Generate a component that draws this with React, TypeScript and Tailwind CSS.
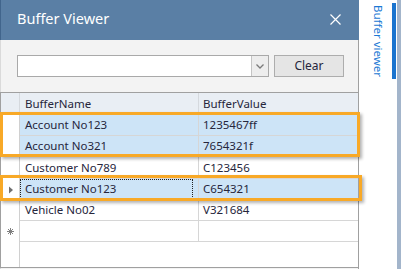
type Row = {
  name: string;
  value: string;
  selected?: boolean;
  current?: boolean;
  h: string;
};

const rows: Row[] = [
  { name: "Account No123", value: "1235467ff", selected: true, h: "h-[22px]" },
  { name: "Account No321", value: "7654321f", selected: true, h: "h-[21px]" },
  { name: "Customer No789", value: "C123456", h: "h-[22px]" },
  { name: "Customer No123", value: "C654321", selected: true, current: true, h: "h-[21px]" },
  { name: "Vehicle No02", value: "V321684", h: "h-[21px]" },
];

function RowMarker({ current }: { current?: boolean }) {
  if (!current) return null;
  return (
    <svg width="6" height="8" viewBox="0 0 6 8" className="ml-[7px]">
      <path d="M1 0.5 L5 4 L1 7.5 Z" fill="#6f6f6f" />
    </svg>
  );
}

export default function App() {
  return (
    <div className="relative flex w-[401px] h-[269px] overflow-hidden bg-white text-[11.5px] text-[#26263c] font-['Noto_Sans',sans-serif]">
      {/* Main window */}
      <div className="flex flex-col w-[359px] h-full">
        <div className="h-[40px] shrink-0 flex items-center justify-between bg-[#5a7fa5] border-l border-[#41658c] pl-4 pr-[18px]">
          <span className="text-[14.5px] text-white -mt-[2px]">Buffer Viewer</span>
          <svg width="11" height="11" viewBox="0 0 11 11" className="-mt-[2px]">
            <path d="M0.5 0.5 L10.5 10.5 M10.5 0.5 L0.5 10.5" stroke="#fff" strokeWidth="1.2" />
          </svg>
        </div>

        <div className="flex-1 flex flex-col bg-[#f3f3f3] border-l border-[#dadada] border-r border-r-[#a0a0a0]">
          <div className="flex pt-[15px] pl-4 h-[52px] shrink-0 items-start">
            <div className="flex w-[252px] h-[22px] border border-[#a9a9a9] bg-white">
              <div className="flex-1" />
              <div className="w-[17px] flex items-center justify-center bg-[#ededed] border-l border-[#c4c4c4]">
                <svg width="8" height="5" viewBox="0 0 8 5">
                  <path d="M0.5 0.5 L4 4 L7.5 0.5" fill="none" stroke="#7a7a7a" strokeWidth="1.3" />
                </svg>
              </div>
            </div>
            <button className="ml-[5px] w-[70px] h-[22px] border border-[#adadad] bg-[#e5e5e5] text-[12px] text-[#26263c]">
              Clear
            </button>
          </div>

          {/* Grid */}
          <div className="flex flex-col h-[176px] bg-white border-t border-b border-[#a0a0a0] -ml-px border-l">
            <div className="flex h-[21px] shrink-0 bg-[#e9eef4]">
              <div className="w-[19px] border-r border-[#d5d9de]" />
              <div className="w-[179px] border-r border-[#d5d9de] flex items-center pl-[5px]">BufferName</div>
              <div className="flex-1 flex items-center pl-[4px]">BufferValue</div>
            </div>
            {rows.map((r) => (
              <div key={r.name} className={`flex shrink-0 ${r.h}`}>
                <div className="w-[19px] flex items-center border-r border-[#d0d0d0] bg-white">
                  <RowMarker current={r.current} />
                </div>
                <div
                  className={`w-[179px] flex items-center border-r border-b border-[#d6d6d6] pl-[5px] ${r.selected ? "bg-[#cde4f7]" : "bg-white"}`}
                >
                  {r.current ? (
                    <div className="-ml-[5px] w-full h-full flex items-center pl-[4px] border border-dotted border-[#222]">
                      {r.name}
                    </div>
                  ) : (
                    r.name
                  )}
                </div>
                <div
                  className={`flex-1 flex items-center border-b border-[#d6d6d6] pl-[4px] ${r.selected ? "bg-[#cde4f7]" : "bg-white"}`}
                >
                  {r.value}
                </div>
              </div>
            ))}
            <div className="flex h-[21px] shrink-0">
              <div className="w-[19px] flex items-center justify-center border-r border-[#d0d0d0]">
                <svg width="7" height="7" viewBox="0 0 7 7">
                  <g stroke="#808080" strokeWidth="1">
                    <path d="M3.5 0 V7" />
                    <path d="M0 3.5 H7" />
                    <path d="M1 1 L6 6" />
                    <path d="M6 1 L1 6" />
                  </g>
                </svg>
              </div>
              <div className="w-[179px] border-r border-b border-[#d6d6d6]" />
              <div className="flex-1 border-b border-[#d6d6d6]" />
            </div>
            <div className="flex flex-1">
              <div className="w-[19px] border-r border-[#d0d0d0]" />
            </div>
          </div>
        </div>
      </div>

      {/* Side tab */}
      <div className="relative w-[38px] h-full bg-white">
        <div className="absolute left-[13px] top-[5px] [writing-mode:vertical-rl] text-[11.5px] text-[#1b78d4] leading-[12px]">
          Buffer viewer
        </div>
        <div className="absolute left-[33px] top-[3px] w-[4px] h-[76px] bg-[#1a74cf]" />
      </div>
      <div className="w-[4px] h-full bg-[#a3b5cb]" />

      {/* Annotation boxes */}
      <div className="absolute left-0 top-[112px] w-[360px] h-[45px] border-[3px] border-[#f8a927] shadow-[2px_2px_3px_rgba(0,0,0,0.3)]" />
      <div className="absolute left-0 top-[175px] w-[362px] h-[26px] border-[3px] border-[#f8a927] shadow-[2px_2px_3px_rgba(0,0,0,0.3)]" />
    </div>
  );
}
